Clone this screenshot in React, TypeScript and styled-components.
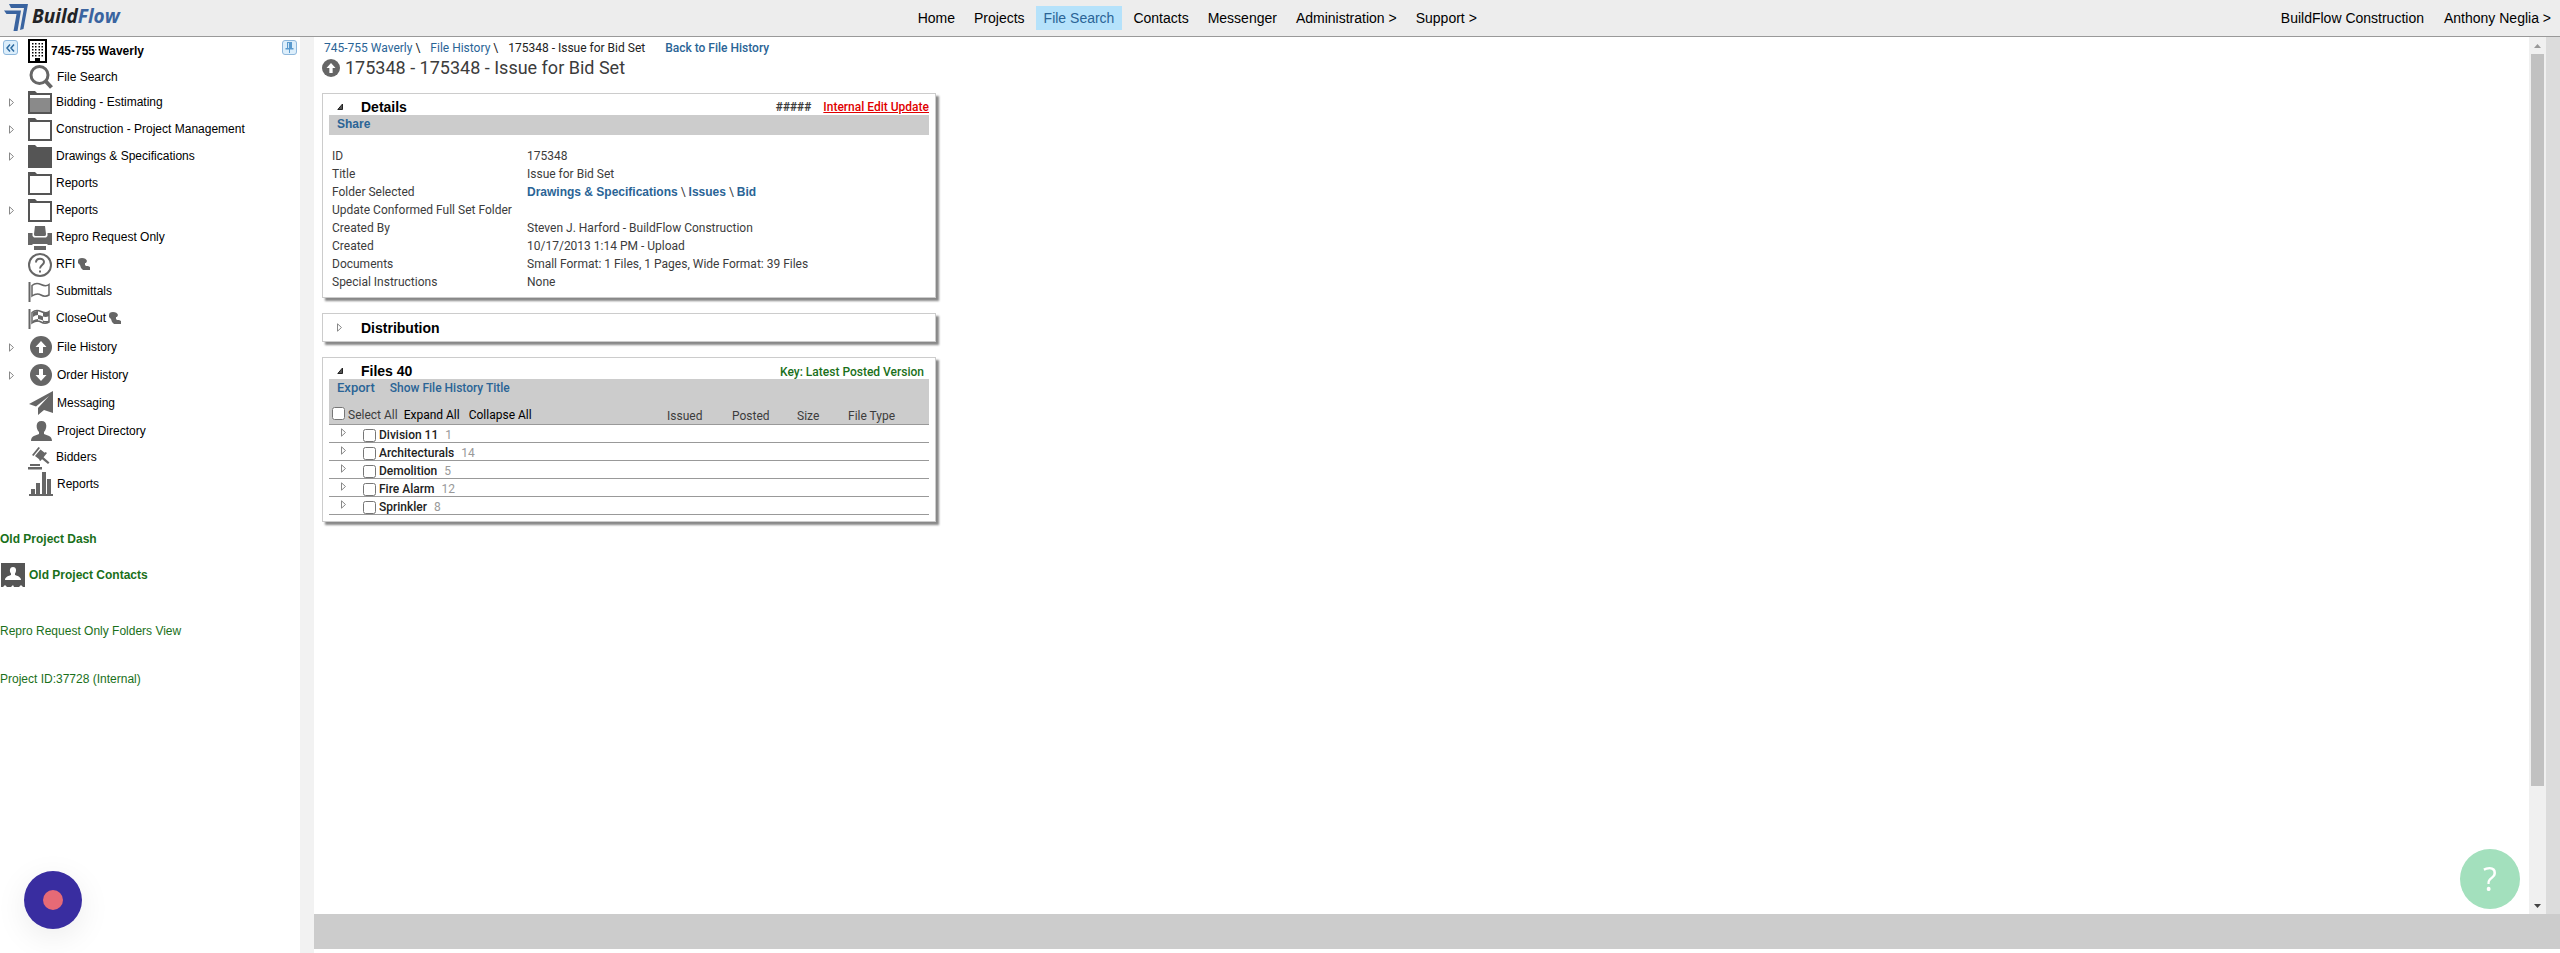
import React, { useState } from "react";
import styled, { createGlobalStyle, css } from "styled-components";

const GlobalStyle = createGlobalStyle`
  *, *::before, *::after { box-sizing: border-box; }
  html, body, #root { height: 100%; }
  body {
    margin: 0;
    background: #fff;
    color: #000;
    font-family: "Liberation Sans", Arial, sans-serif;
    font-size: 12px;
    overflow: hidden;
  }
  a { text-decoration: none; }
  button { font: inherit; color: inherit; background: none; border: 0; padding: 0; cursor: pointer; }
`;

const Page = styled.div`
  display: flex;
  flex-direction: column;
  height: 100%;
`;

/* ---------- top bar ---------- */

const TopBar = styled.header`
  display: flex;
  flex: none;
  align-items: center;
  justify-content: space-between;
  height: 37px;
  padding: 0 9px 1px 4px;
  background: #ededed;
  border-bottom: 1px solid #999;
  font-size: 14px;
`;

const Brand = styled.a`
  display: flex;
  align-items: center;
  gap: 3px;
  color: #222326;
  font-family: "Open Sans", sans-serif;
  font-size: 19px;
  font-style: italic;
  font-weight: 700;
  line-height: 28px;
`;

const BrandName = styled.span`
  padding-bottom: 3px;
`;

const BrandAccent = styled.span`
  color: #3a64a0;
`;

const MainNav = styled.nav`
  display: flex;
  gap: 3px;
  margin-right: 6px;
`;

const NavLink = styled.a<{ $active?: boolean }>`
  padding: 0 8px;
  line-height: 24px;
  color: ${(p) => (p.$active ? "#2a6496" : "#000")};
  background: ${(p) => (p.$active ? "#b5e2fb" : "transparent")};
`;

const Account = styled.div`
  display: flex;
  gap: 20px;
  line-height: 24px;
  a { color: #000; }
`;

/* ---------- body ---------- */

const Body = styled.div`
  display: flex;
  flex: 1;
  min-height: 0;
`;

const Sidebar = styled.aside`
  display: flex;
  flex: none;
  flex-direction: column;
  width: 300px;
`;

const Splitter = styled.div`
  flex: none;
  width: 14px;
  background: #f2f2f2;
`;

const ProjectRow = styled.div`
  display: flex;
  align-items: center;
  height: 27px;
  padding: 0 3px;
`;

const PaneButton = styled.button`
  display: grid;
  place-items: center;
  flex: none;
  width: 15px;
  height: 15px;
  margin-bottom: 6px;
  border: 1px solid #8fb8dc;
  border-radius: 3px;
  background: #dceefb;
`;

const ProjectName = styled.a`
  display: flex;
  flex: 1;
  align-items: center;
  gap: 4px;
  padding-left: 10px;
  color: #000;
  font-weight: 700;
`;

const Tree = styled.ul`
  margin: 0;
  padding: 0;
  list-style: none;
`;

const TreeRow = styled.li<{ $height: number }>`
  display: flex;
  align-items: center;
  height: ${(p) => p.$height}px;
`;

const Toggle = styled.button<{ $width: number }>`
  display: flex;
  flex: none;
  align-items: center;
  width: ${(p) => p.$width}px;
  height: 16px;
  padding-left: 9px;
`;

const TogglePad = styled.span`
  flex: none;
  width: 28px;
`;

const TreeLink = styled.a<{ $shift?: boolean }>`
  display: flex;
  align-items: center;
  gap: 4px;
  padding-left: ${(p) => (p.$shift ? 1 : 0)}px;
  color: #000;
`;

const IconSlot = styled.span`
  display: flex;
  flex: none;
  justify-content: center;
  width: 24px;
`;

const TreeText = styled.span<{ $shift?: boolean }>`
  display: flex;
  align-items: center;
  gap: 3px;
  padding-bottom: ${(p) => (p.$shift ? 0 : 2)}px;
`;

const SideLinks = styled.div`
  display: flex;
  flex-direction: column;
  gap: 32px;
  padding-top: 34px;
  line-height: 16px;
`;

const LinkPair = styled.div`
  display: flex;
  flex-direction: column;
  gap: 16px;
  padding-bottom: 4px;
`;

const GreenLink = styled.a<{ $bold?: boolean }>`
  display: flex;
  align-items: center;
  gap: 4px;
  color: #1a701a;
  font-weight: ${(p) => (p.$bold ? 700 : 400)};
`;

const ContactsLink = styled(GreenLink)`
  padding-left: 1px;
`;

/* ---------- content ---------- */

const Workspace = styled.div`
  display: flex;
  flex: 1;
  flex-direction: column;
  min-width: 0;
  padding-bottom: 4px;
`;

const Stage = styled.div`
  display: flex;
  flex: 1;
  min-height: 0;
`;

const Content = styled.main`
  flex: 1;
  min-width: 0;
  padding: 3px 8px 0;
  color: #3c3c3c;
  font-family: Roboto, sans-serif;
  line-height: 16px;
`;

const BottomBar = styled.footer`
  flex: none;
  height: 35px;
  background: #ccc;
`;

const ScrollTrack = styled.div`
  display: flex;
  flex: none;
  flex-direction: column;
  align-items: center;
  width: 17px;
  background: #f0f0f0;
`;

const ScrollStep = styled.button`
  display: grid;
  place-items: center;
  width: 17px;
  height: 17px;
`;

const ScrollRail = styled.div`
  flex: 1;
  width: 13px;
`;

const ScrollThumb = styled.div`
  height: 86.8%;
  background: #c1c1c1;
`;

const RightGutter = styled.div`
  flex: none;
  width: 14px;
  background: #dcdcdc;
`;

const Crumbs = styled.nav`
  display: flex;
  padding-left: 2px;
  color: #222;
`;

const Crumb = styled.span`
  margin-right: 10px;
  white-space: pre;
`;

const BlueLink = styled.a`
  color: #2a6496;
`;

const FolderLink = styled(BlueLink)`
  font-family: "Liberation Sans", Arial, sans-serif;
  font-weight: 700;
`;

const BackLink = styled(BlueLink)`
  padding-left: 10px;
  font-weight: 500;
`;

const PageTitle = styled.h1`
  display: flex;
  align-items: center;
  gap: 5px;
  margin: 0 0 13px;
  font-size: 18px;
  font-weight: 400;
  line-height: 24px;
`;

const Panel = styled.section`
  width: 614px;
  max-width: 100%;
  margin-bottom: 15px;
  padding: 0 6px;
  border: 1px solid #ccc;
  box-shadow: 3px 3px 2px #888;
  background: #fff;
`;

const PanelHead = styled.div<{ $tall?: boolean }>`
  display: flex;
  align-items: center;
  height: ${(p) => (p.$tall ? 27 : 21)}px;
  padding-top: ${(p) => (p.$tall ? 0 : 4)}px;
`;

const PanelToggle = styled.button`
  display: flex;
  flex: none;
  align-items: center;
  width: 32px;
  height: 16px;
  padding-left: 8px;
`;

const PanelTitle = styled.h2`
  flex: 1;
  margin: 0;
  color: #000;
  font-family: "Liberation Sans", Arial, sans-serif;
  font-size: 14px;
  font-weight: 700;
`;

const Hashes = styled.span`
  margin-right: 12px;
  font-weight: 700;
`;

const EditLink = styled.a`
  color: #e00000;
  font-weight: 500;
  text-decoration: underline;
`;

const KeyLink = styled.a`
  padding: 3px 5px 0 0;
  color: #1a701a;
  font-weight: 500;
`;

const Toolbar = styled.div<{ $roomy?: boolean }>`
  display: flex;
  gap: 15px;
  height: ${(p) => (p.$roomy ? 23 : 20)}px;
  padding: 1px 0 0 8px;
  background: #ccc;
`;

const ToolButton = styled.button<{ $kind?: "share" | "large" }>`
  align-self: flex-start;
  color: #2a6496;
  font-weight: 500;
  ${(p) => p.$kind === "share" && css`
    font-family: "Liberation Sans", Arial, sans-serif;
    font-weight: 700;
  `}
  ${(p) => p.$kind === "large" && css`font-size: 13px;`}
`;

const DetailTable = styled.table`
  width: 100%;
  margin: 12px 0 6px;
  border-collapse: collapse;
  table-layout: fixed;

  th, td { height: 18px; padding: 0 0 0 3px; text-align: left; font-weight: 400; }
  th { width: 195px; }
`;

const FileTable = styled.table`
  width: 100%;
  margin-bottom: 6px;
  border-collapse: collapse;
  table-layout: fixed;

  th, td { padding: 0; text-align: left; font-weight: 400; border-bottom: 1px solid #999; }
  th { height: 22px; background: #ccc; vertical-align: bottom; }
  td { height: 18px; }
`;

const Col = styled.col<{ $width?: number }>`
  ${(p) => p.$width && css`width: ${p.$width}px;`}
`;

const HeadTools = styled.div`
  display: flex;
  align-items: center;
  gap: 6px;
  padding-left: 3px;
  button { color: #000; margin-right: 3px; }
`;

const CheckLabel = styled.label<{ $raised?: boolean }>`
  display: flex;
  align-items: center;
  gap: 3px;
  input { margin-bottom: ${(p) => (p.$raised ? 4 : 0)}px; }
`;

const Check = styled.input`
  flex: none;
  width: 13px;
  height: 13px;
  margin: 0;
`;

const FileRow = styled.div`
  display: flex;
  align-items: center;
  height: 17px;
  padding-top: 4px;
`;

const FileToggle = styled(Toggle)`
  padding: 0 0 5px 12px;
`;

const FileName = styled.span`
  color: #222;
  font-weight: 500;
`;

const Count = styled.span`
  margin-left: 7px;
  color: #999;
`;

/* ---------- floating buttons ---------- */

const RecordButton = styled.button`
  position: fixed;
  bottom: 24px;
  left: 24px;
  display: grid;
  place-items: center;
  width: 58px;
  height: 58px;
  border-radius: 50%;
  background: #392da0;
  box-shadow: 0 8px 32px rgba(0, 0, 0, 0.08);

  &::before {
    content: "";
    width: 20px;
    height: 20px;
    border-radius: 50%;
    background: #e66a76;
  }
`;

const HelpButton = styled.button`
  position: fixed;
  right: 40px;
  bottom: 44px;
  width: 60px;
  height: 60px;
  border-radius: 50%;
  background: #a3e0bd;
  color: #fff;
  font-family: "Open Sans", sans-serif;
  font-size: 32px;
  line-height: 60px;
`;

/* ---------- icons ---------- */

const G = "#666";

const LogoMark = () => (
  <svg width="25" height="28" viewBox="0 0 25 28" aria-hidden="true">
    <path d="M5 0h19l-4.500 25-3.500 1L20 4H7z" fill="#3a64a0" />
    <path d="M0 6.500h17l-3.500 20.500h-4l3-17H2.500z" fill="#3a64a0" />
  </svg>
);

const Chevrons = () => (
  <svg width="9" height="8" viewBox="0 0 9 8" aria-hidden="true">
    <path d="M4 0.5 1 4l3 3.500M8 0.5 5 4l3 3.500" fill="none" stroke="#2c6aa0" strokeWidth="1.5" />
  </svg>
);

const Pin = () => (
  <svg width="9" height="11" viewBox="0 0 9 11" aria-hidden="true">
    <path d="M2 0h5v6h1.500v1.500H5V11H4V7.500H.5V6H2z" fill="#5a9ace" />
    <path d="M3 1h1v5H3z" fill="#cfe5f7" />
  </svg>
);

const Building = () => (
  <svg width="19" height="24" viewBox="0 0 19 24" aria-hidden="true">
    <path d="M1 1h17v22H1z" fill="#fff" stroke="#000" strokeWidth="2" />
    {[4, 7, 10, 13, 16].map((y) => (
      <path key={y} d={`M4 ${y}h1.500v1.500H4zM7 ${y}h1.500v1.500H7zM10.500 ${y}h1.500v1.500h-1.500zM13.500 ${y}h1.500v1.500h-1.500z`} />
    ))}
    <path d="M7 19h5v4H7z" />
  </svg>
);

const Search = () => (
  <svg width="24" height="24" viewBox="0 0 24 24" aria-hidden="true">
    <circle cx="10.500" cy="10" r="8.500" fill="none" stroke={G} strokeWidth="3" />
    <path d="m16.500 16 6 6.500" stroke={G} strokeWidth="4" />
  </svg>
);

const Folder = ({ fill = "#fff", half = false }: { fill?: string; half?: boolean }) => (
  <svg width="24" height="23" viewBox="0 0 24 23" aria-hidden="true">
    <path d="M0 0h7l2 2h15v21H0z" fill="#555" />
    <path d="M2 4h20v17H2z" fill={fill} />
    {half && <path d="M2 7h20v14H2z" fill="#8a8a8a" />}
  </svg>
);

const Printer = () => (
  <svg width="24" height="24" viewBox="0 0 24 24" aria-hidden="true" fill={G}>
    <path d="M7 0h10l1 8q.3 2-1.500 2H7.500Q5.700 10 6 8z" />
    <path d="M0 7h4.500v3l1.500 1.500h12l1.500-1.500V7H24v12h-4l-1-1H5l-1 1H0z" />
    <path d="M6 20h12v4H6z" />
  </svg>
);

const Question = () => (
  <svg width="24" height="24" viewBox="0 0 24 24" aria-hidden="true" fill="none" stroke={G}>
    <circle cx="12" cy="12" r="11" strokeWidth="2" />
    <path d="M8 9.500c0-5 8-5 8-.5 0 3-4 3-4 6.500" strokeWidth="2" />
    <path d="M12 17.500v2" strokeWidth="2" />
  </svg>
);

const Flag = ({ checked = false }: { checked?: boolean }) => (
  <svg width="24" height="20" viewBox="0 0 24 20" aria-hidden="true" fill="none" stroke={G}>
    <path d="M1.500 0v20" strokeWidth="2" />
    <path d="M4 3.500q4-3.500 9-1t8 0v10.500q-4 2.500-8 0T4 14z" strokeWidth="1.500" />
    {checked && (
      <path
        d="M5 3.500q3-2 5-1.500v4q-3 0-5 2zM15 3.500q4 1 6-.5V7q-3 1.500-6 .5zM10 6q3 0 5 1.500v4q-3-1.500-5-1.500zM5 11.500q2-1.500 5-1.500v2.500q-3-.5-5 1zM15 11.500q3 1 6 0v1q-3 1.500-6 .5z"
        fill={G}
        stroke="none"
      />
    )}
  </svg>
);

const HardHat = () => (
  <svg width="13" height="12" viewBox="0 0 13 12" aria-hidden="true" fill={G}>
    <path d="M0 3Q0 0 4 0t5 3l-1 2H7v2l1 1h2l2 1v3H5l-2-2-1-3-2-2z" />
  </svg>
);

const ArrowDisc = ({ size = 22, down = false }: { size?: number; down?: boolean }) => (
  <svg width={size} height={size} viewBox="0 0 22 22" aria-hidden="true">
    <circle cx="11" cy="11" r="11" fill={G} />
    <path
      d={down ? "M9 5h4v6h3.500L11 17l-5.500-6H9z" : "M9 17h4v-6h3.500L11 5l-5.500 6H9z"}
      fill="#fff"
    />
  </svg>
);

const Plane = () => (
  <svg width="24" height="24" viewBox="0 0 24 24" aria-hidden="true" fill={G}>
    <path d="M24 0v22l-9-3-6 5v-7L20 5 7 15.500 0 13z" />
  </svg>
);

const Person = () => (
  <svg width="21" height="20" viewBox="0 0 21 20" aria-hidden="true" fill={G}>
    <path d="M10.500 0C17 0 16 8 13 11v2c3 1.500 8 1.500 8 7H0c0-5.500 5-5.500 8-7v-2C5 8 4 0 10.500 0z" />
  </svg>
);

const Gavel = () => (
  <svg width="24" height="24" viewBox="0 0 24 24" aria-hidden="true" fill={G}>
    <path d="m4 9 6.500-8 1.500 1-6.500 8zM7 10l5.500-6.500L17 7l-5.500 6.500zM11 14l6.500-8 1.500 1-6.500 8z" />
    <path d="m13.500 9.500 8 7-1.500 1.500-8-6.500zM2 18h10v2H2zM0 21h14v2.500H0z" />
  </svg>
);

const Bars = () => (
  <svg width="24" height="24" viewBox="0 0 24 24" aria-hidden="true" fill={G}>
    <path d="M2 17h4v5H2zM7 11h4v11H7zM13 0h4v22h-4zM18 7h4v15h-4zM0 22h24v2H0z" />
  </svg>
);

const Contact = () => (
  <svg width="24" height="24" viewBox="0 0 24 24" aria-hidden="true">
    <path d="M0 0h24v24h-2l-2-2-2 2h-5l-1-2-2 2H6l-2-2-2 2H0z" fill="#555" />
    <path d="M12 4c4 0 3.500 5 2 6.500V12c2 1 6 1.500 6 5H4c0-3.500 4-4 6-5v-1.500C8.500 9 8 4 12 4z" fill="#fff" />
  </svg>
);

const Collapsed = () => (
  <svg width="5" height="9" viewBox="0 0 5 9" aria-hidden="true">
    <path d="M.5.8v7.400l4-3.700z" fill="#fff" stroke="#888" strokeWidth="1" />
  </svg>
);

const Expanded = () => (
  <svg width="7" height="7" viewBox="0 0 7 7" aria-hidden="true">
    <path d="M5.500 1v5.500H.8z" fill="#555" stroke="#222" strokeWidth="1" />
  </svg>
);

/* ---------- data ---------- */

type Item = {
  label: string;
  icon: React.ReactNode;
  height: number;
  expandable?: boolean;
  hat?: boolean;
  shift?: boolean;
};

const items: Item[] = [
  { label: "File Search", icon: <Search />, height: 25, shift: true },
  { label: "Bidding - Estimating", icon: <Folder half />, height: 27, expandable: true },
  { label: "Construction - Project Management", icon: <Folder />, height: 27, expandable: true },
  { label: "Drawings & Specifications", icon: <Folder fill="#555" />, height: 27, expandable: true },
  { label: "Reports", icon: <Folder />, height: 27 },
  { label: "Reports", icon: <Folder />, height: 27, expandable: true },
  { label: "Repro Request Only", icon: <Printer />, height: 27 },
  { label: "RFI", icon: <Question />, height: 27, hat: true },
  { label: "Submittals", icon: <Flag />, height: 27 },
  { label: "CloseOut", icon: <Flag checked />, height: 28, hat: true },
  { label: "File History", icon: <ArrowDisc />, height: 28, expandable: true, shift: true },
  { label: "Order History", icon: <ArrowDisc down />, height: 28, expandable: true, shift: true },
  { label: "Messaging", icon: <Plane />, height: 28, shift: true },
  { label: "Project Directory", icon: <Person />, height: 28, shift: true },
  { label: "Bidders", icon: <Gavel />, height: 26 },
  { label: "Reports", icon: <Bars />, height: 26, shift: true },
];

const navItems = ["Home", "Projects", "File Search", "Contacts", "Messenger", "Administration >", "Support >"];

const details: [string, React.ReactNode][] = [
  ["ID", "175348"],
  ["Title", "Issue for Bid Set"],
  [
    "Folder Selected",
    <>
      <FolderLink href="#drawings">Drawings &amp; Specifications</FolderLink> \{" "}
      <FolderLink href="#issues">Issues</FolderLink> \ <FolderLink href="#bid">Bid</FolderLink>
    </>,
  ],
  ["Update Conformed Full Set Folder", ""],
  ["Created By", "Steven J. Harford - BuildFlow Construction"],
  ["Created", "10/17/2013 1:14 PM - Upload"],
  ["Documents", "Small Format: 1 Files, 1 Pages, Wide Format: 39 Files"],
  ["Special Instructions", "None"],
];

const groups: [string, number][] = [
  ["Division 11", 1],
  ["Architecturals", 14],
  ["Demolition", 5],
  ["Fire Alarm", 12],
  ["Sprinkler", 8],
];

export default function App() {
  const [selected, setSelected] = useState<string[]>([]);
  const toggle = (name: string) =>
    setSelected((s) => (s.includes(name) ? s.filter((n) => n !== name) : [...s, name]));
  const all = selected.length === groups.length;

  return (
    <Page>
      <GlobalStyle />
      <TopBar>
        <Brand href="#home">
          <LogoMark />
          <BrandName>Build<BrandAccent>Flow</BrandAccent></BrandName>
        </Brand>
        <MainNav>
          {navItems.map((label) => (
            <NavLink key={label} href="#nav" $active={label === "File Search"}>{label}</NavLink>
          ))}
        </MainNav>
        <Account>
          <a href="#company">BuildFlow Construction</a>
          <a href="#account">Anthony Neglia &gt;</a>
        </Account>
      </TopBar>

      <Body>
        <Sidebar>
          <ProjectRow>
            <PaneButton aria-label="Collapse pane"><Chevrons /></PaneButton>
            <ProjectName href="#project"><Building />745-755 Waverly</ProjectName>
            <PaneButton aria-label="Pin pane"><Pin /></PaneButton>
          </ProjectRow>
          <Tree>
            {items.map((item, i) => (
              <TreeRow key={i} $height={item.height}>
                {item.expandable ? (
                  <Toggle $width={28} aria-label={`Expand ${item.label}`}><Collapsed /></Toggle>
                ) : (
                  <TogglePad />
                )}
                <TreeLink href="#item" $shift={item.shift}>
                  <IconSlot>{item.icon}</IconSlot>
                  <TreeText $shift={item.shift}>
                    {item.label}
                    {item.hat && <HardHat />}
                  </TreeText>
                </TreeLink>
              </TreeRow>
            ))}
          </Tree>
          <SideLinks>
            <LinkPair>
              <GreenLink $bold href="#dash">Old Project Dash</GreenLink>
              <ContactsLink $bold href="#contacts"><Contact />Old Project Contacts</ContactsLink>
            </LinkPair>
            <GreenLink href="#folders">Repro Request Only Folders View</GreenLink>
            <GreenLink href="#id">Project ID:37728 (Internal)</GreenLink>
          </SideLinks>
        </Sidebar>
        <Splitter />

        <Workspace>
          <Stage>
            <Content>
              <Crumbs aria-label="Breadcrumb">
                <Crumb><BlueLink href="#project">745-755 Waverly</BlueLink> \</Crumb>
                <Crumb><BlueLink href="#history">File History</BlueLink> \</Crumb>
                <Crumb>175348 - Issue for Bid Set</Crumb>
                <BackLink href="#history">Back to File History</BackLink>
              </Crumbs>
              <PageTitle><ArrowDisc size={18} />175348 - 175348 - Issue for Bid Set</PageTitle>

              <Panel>
                <PanelHead>
                  <PanelToggle aria-label="Collapse details"><Expanded /></PanelToggle>
                  <PanelTitle>Details</PanelTitle>
                  <Hashes>#####</Hashes>
                  <EditLink href="#edit">Internal Edit Update</EditLink>
                </PanelHead>
                <Toolbar><ToolButton $kind="share">Share</ToolButton></Toolbar>
                <DetailTable>
                  <tbody>
                    {details.map(([name, value]) => (
                      <tr key={name}>
                        <th scope="row">{name}</th>
                        <td>{value}</td>
                      </tr>
                    ))}
                  </tbody>
                </DetailTable>
              </Panel>

              <Panel>
                <PanelHead $tall>
                  <PanelToggle aria-label="Expand distribution"><Collapsed /></PanelToggle>
                  <PanelTitle>Distribution</PanelTitle>
                </PanelHead>
              </Panel>

              <Panel>
                <PanelHead>
                  <PanelToggle aria-label="Collapse files"><Expanded /></PanelToggle>
                  <PanelTitle>Files 40</PanelTitle>
                  <KeyLink href="#key">Key: Latest Posted Version</KeyLink>
                </PanelHead>
                <Toolbar $roomy>
                  <ToolButton $kind="large">Export</ToolButton>
                  <ToolButton>Show File History Title</ToolButton>
                </Toolbar>
                <FileTable>
                  <colgroup>
                    <Col />
                    <Col $width={65} />
                    <Col $width={65} />
                    <Col $width={51} />
                    <Col $width={81} />
                  </colgroup>
                  <thead>
                    <tr>
                      <th>
                        <HeadTools>
                          <CheckLabel $raised>
                            <Check
                              type="checkbox"
                              checked={all}
                              onChange={() => setSelected(all ? [] : groups.map((g) => g[0]))}
                            />
                            Select All
                          </CheckLabel>
                          <button>Expand All</button>
                          <button>Collapse All</button>
                        </HeadTools>
                      </th>
                      <th>Issued</th>
                      <th>Posted</th>
                      <th>Size</th>
                      <th>File Type</th>
                    </tr>
                  </thead>
                  <tbody>
                    {groups.map(([name, count]) => (
                      <tr key={name}>
                        <td colSpan={5}>
                          <FileRow>
                            <FileToggle $width={34} aria-label={`Expand ${name}`}><Collapsed /></FileToggle>
                            <CheckLabel>
                              <Check
                                type="checkbox"
                                checked={selected.includes(name)}
                                onChange={() => toggle(name)}
                              />
                              <FileName>{name}</FileName>
                            </CheckLabel>
                            <Count>{count}</Count>
                          </FileRow>
                        </td>
                      </tr>
                    ))}
                  </tbody>
                </FileTable>
              </Panel>
            </Content>
            <ScrollTrack>
              <ScrollStep aria-label="Scroll up">
                <svg width="7" height="4" viewBox="0 0 7 4"><path d="M0 4 3.500 0 7 4z" fill="#999" /></svg>
              </ScrollStep>
              <ScrollRail><ScrollThumb /></ScrollRail>
              <ScrollStep aria-label="Scroll down">
                <svg width="7" height="4" viewBox="0 0 7 4"><path d="M0 0h7L3.500 4z" fill="#444" /></svg>
              </ScrollStep>
            </ScrollTrack>
            <RightGutter />
          </Stage>
          <BottomBar />
        </Workspace>
      </Body>

      <RecordButton aria-label="Record" />
      <HelpButton aria-label="Help">?</HelpButton>
    </Page>
  );
}
